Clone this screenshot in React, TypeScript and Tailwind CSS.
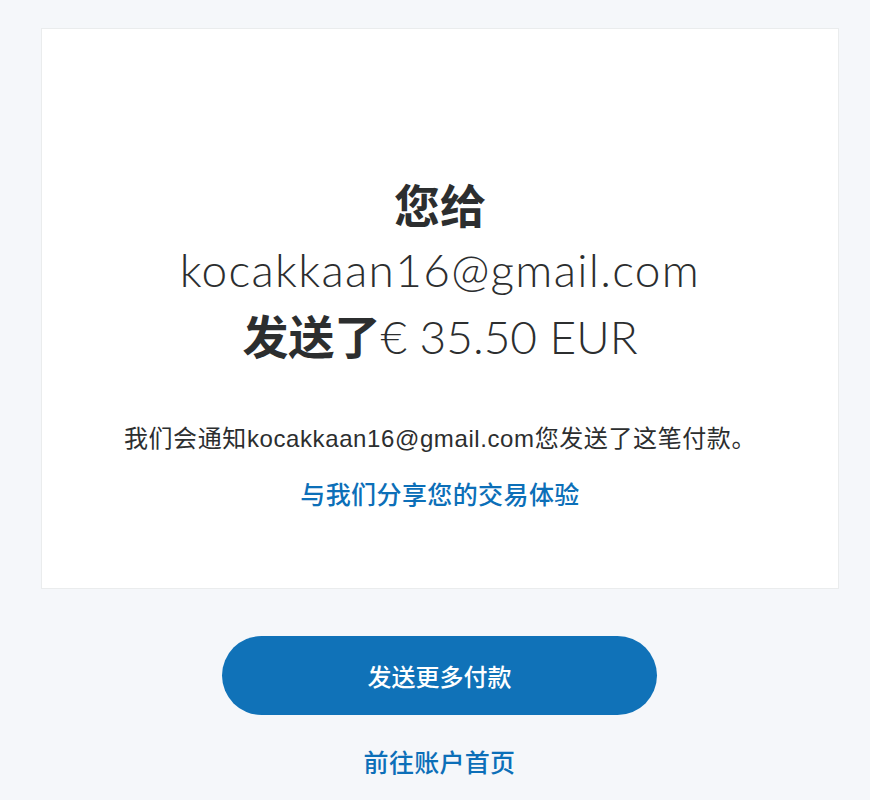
import React from "react";

const email = "kocakkaan16@gmail.com";

export default function App() {
  return (
    <div className="min-h-[800px] bg-[#f5f7fa] pt-[28px]">
      {/* Confirmation card */}
      <div className="ml-[41px] w-[798px] h-[561px] border border-[#eaeced] bg-white pt-[142px] text-center text-[#2c2e2f]">
        <h1 className="font-['Lato','Noto_Sans_CJK_SC',sans-serif] text-[46px] leading-[64px] font-light">
          <span className="font-['Noto_Sans_CJK_SC',sans-serif] font-bold">您给</span>
          <br />
          <span className="tracking-[1.3px]">{email}</span>
          <br />
          <span className="font-['Noto_Sans_CJK_SC',sans-serif] font-bold">发送了</span>€ 35.50 EUR
        </h1>

        <p className="mt-[54px] font-['Liberation_Sans','Noto_Sans_CJK_SC',sans-serif] text-[24px] leading-[32px] tracking-[0.6px] text-[#2c2e2f]">
          我们会通知{email}您发送了这笔付款。
        </p>

        <a
          href="#"
          className="mt-[22px] inline-block font-['Noto_Sans_CJK_SC',sans-serif] text-[25px] leading-[32px] tracking-[0.4px] font-medium text-[#0c6fb8]"
        >
          与我们分享您的交易体验
        </a>
      </div>

      {/* Actions */}
      <div className="flex flex-col items-center pt-[47px]">
        <button className="ml-[9px] h-[79px] w-[435px] rounded-full bg-[#1072b8] font-['Noto_Sans_CJK_SC',sans-serif] text-[24px] font-medium text-white">
          发送更多付款
        </button>
        <a
          href="#"
          className="ml-[9px] mt-[30px] font-['Noto_Sans_CJK_SC',sans-serif] text-[25px] leading-[32px] tracking-[0.3px] font-medium text-[#0c6fb8]"
        >
          前往账户首页
        </a>
      </div>
    </div>
  );
}
